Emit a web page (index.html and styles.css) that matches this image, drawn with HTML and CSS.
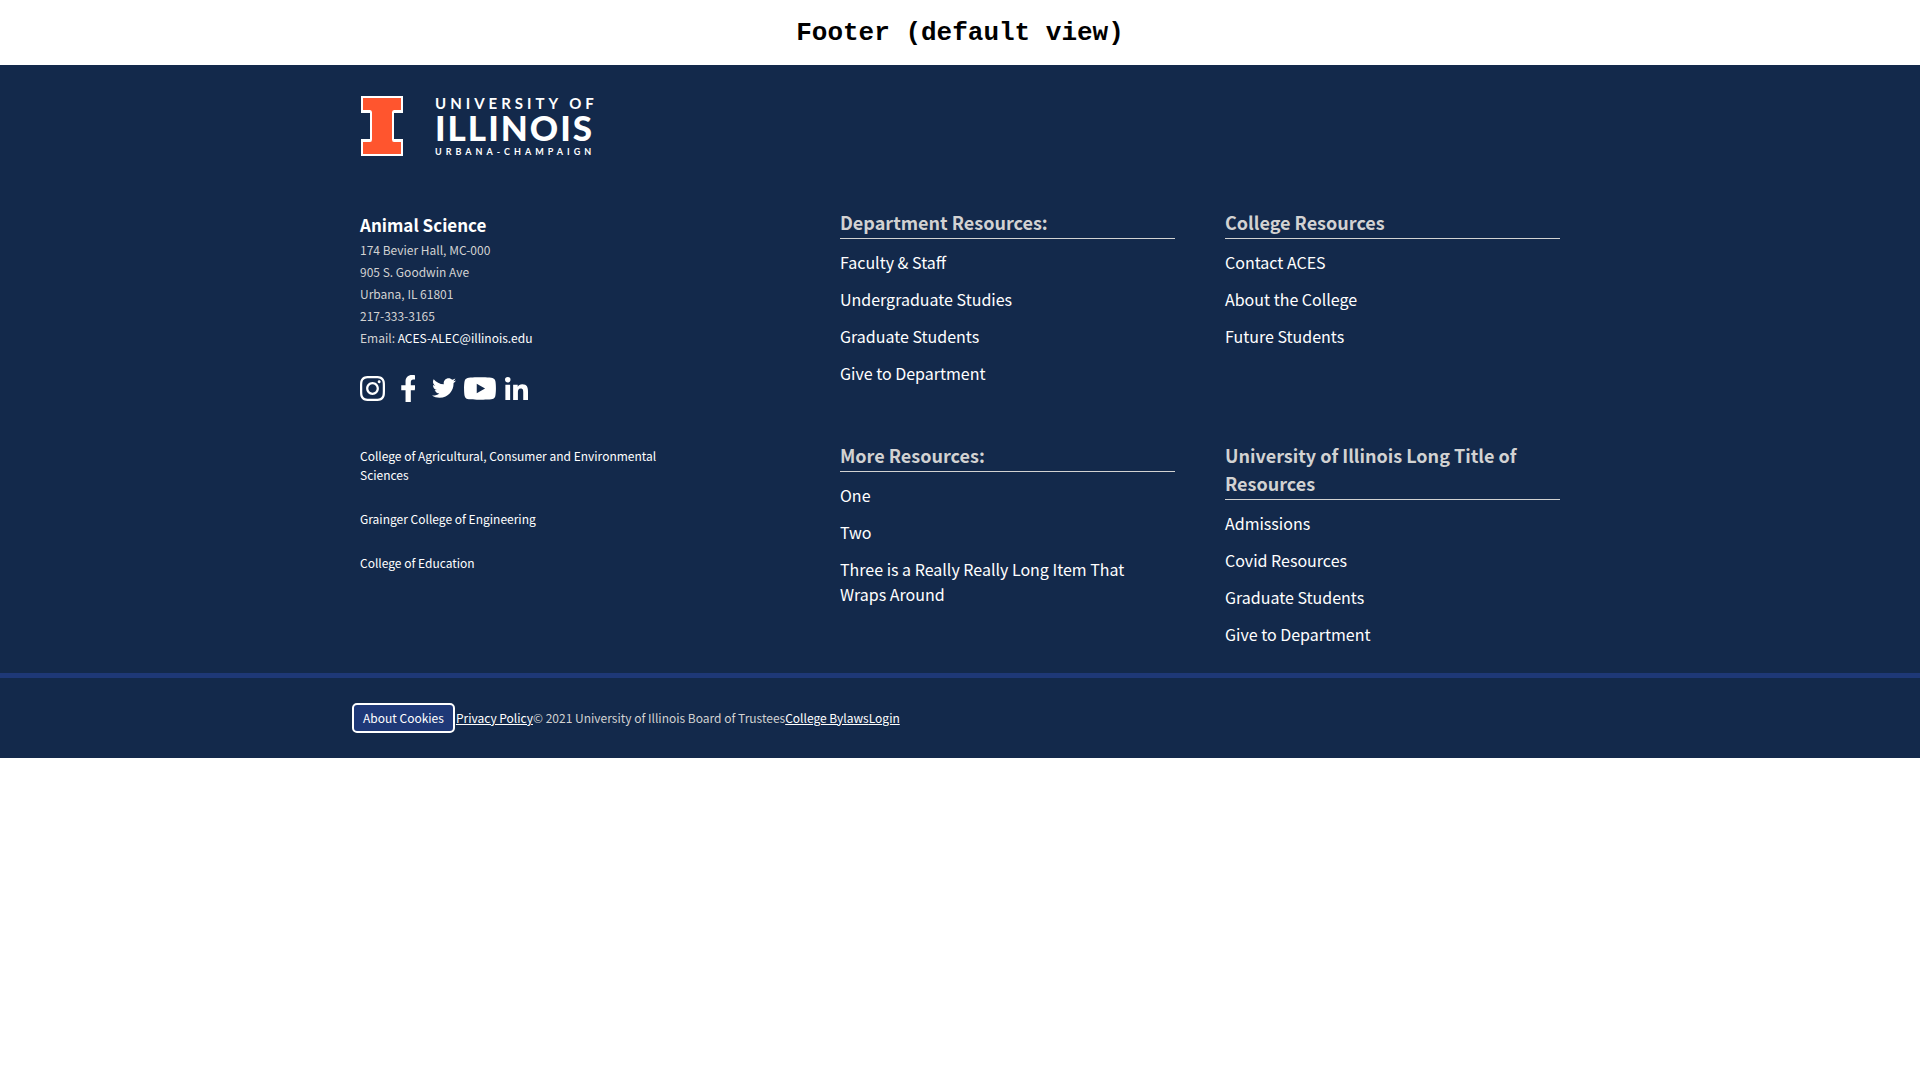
FILE: index.html
```html
<!DOCTYPE html>
<html lang="en">
<head>
<meta charset="utf-8">
<meta name="viewport" content="width=device-width, initial-scale=1">
<title>Footer (default view)</title>
<link rel="stylesheet" href="styles.css">
</head>
<body>
<h1 class="page-title">Footer (default view)</h1>
<footer class="footer">
  <div class="container">
    <a class="logo" href="#" aria-label="University of Illinois Urbana-Champaign">
      <svg class="block-i" viewBox="0 0 42 60" aria-hidden="true">
        <path fill="#fff" d="M0 0H42V17H33V43H42V60H0V43H9V17H0Z"/>
        <path fill="#ff552e" d="M2 2H40V14H33Q31 14 31 16.500V43.500Q31 46 33 46H40V58H2V46H9Q11 46 11 43.500V16.500Q11 14 9 14H2Z"/>
      </svg>
      <span class="wordmark">
        <span class="wordmark-top">UNIVERSITY OF</span>
        <span class="wordmark-main">ILLINOIS</span>
        <span class="wordmark-bottom">URBANA-CHAMPAIGN</span>
      </span>
    </a>
    <div class="columns">
      <section class="about">
        <h2 class="unit">Animal Science</h2>
        <address class="address">
          <p>174 Bevier Hall, MC-000</p>
          <p>905 S. Goodwin Ave</p>
          <p>Urbana, IL 61801</p>
          <p>217-333-3165</p>
          <p>Email: <a href="#">ACES-ALEC@illinois.edu</a></p>
        </address>
        <ul class="social">
          <li><a href="#" aria-label="Instagram"><svg width="25" height="25" viewBox="0 32 448 448"><path d="M224.100 141c-63.600 0-114.900 51.300-114.900 114.900s51.300 114.900 114.900 114.900S339 319.500 339 255.900 287.700 141 224.100 141zm0 189.600c-41.100 0-74.700-33.500-74.700-74.700s33.500-74.700 74.700-74.700 74.700 33.500 74.700 74.700-33.600 74.700-74.700 74.700zm146.400-194.300c0 14.900-12 26.800-26.800 26.800-14.900 0-26.800-12-26.800-26.800s12-26.800 26.800-26.800 26.800 12 26.800 26.800zm76.100 27.200c-1.700-35.900-9.900-67.700-36.200-93.900-26.200-26.200-58-34.400-93.900-36.200-37-2.100-147.900-2.100-184.900 0-35.800 1.700-67.600 9.900-93.900 36.100s-34.400 58-36.200 93.900c-2.100 37-2.100 147.900 0 184.900 1.700 35.900 9.900 67.700 36.200 93.900s58 34.400 93.900 36.200c37 2.100 147.900 2.100 184.900 0 35.900-1.700 67.700-9.900 93.900-36.200 26.200-26.200 34.400-58 36.200-93.900 2.100-37 2.100-147.800 0-184.800zM398.800 388c-7.800 19.600-22.900 34.700-42.600 42.600-29.500 11.700-99.500 9-132.100 9s-102.700 2.600-132.100-9c-19.600-7.800-34.700-22.900-42.600-42.600-11.700-29.500-9-99.500-9-132.100s-2.600-102.700 9-132.100c7.800-19.600 22.900-34.700 42.600-42.600 29.500-11.700 99.500-9 132.100-9s102.700-2.600 132.100 9c19.600 7.800 34.700 22.900 42.600 42.600 11.700 29.500 9 99.500 9 132.100s2.700 102.700-9 132.100z"/></svg></a></li>
          <li><a href="#" aria-label="Facebook"><svg width="14" height="27" viewBox="22 0 258 512"><path d="M279.140 288l14.220-92.660h-88.910v-60.130c0-25.350 12.420-50.060 52.240-50.060h40.420V6.260S260.430 0 225.360 0c-73.220 0-121.080 44.380-121.080 124.720v70.620H22.890V288h81.390v224h100.170V288z"/></svg></a></li>
          <li><a href="#" aria-label="Twitter"><svg width="24" height="20" viewBox="0 48 512 416"><path d="M459.370 151.716c.325 4.548.325 9.097.325 13.645 0 138.720-105.583 298.558-298.558 298.558-59.452 0-114.680-17.219-161.137-47.106 8.447.974 16.568 1.299 25.340 1.299 49.055 0 94.213-16.568 130.274-44.832-46.132-.975-84.792-31.188-98.112-72.772 6.498.974 12.995 1.624 19.818 1.624 9.421 0 18.843-1.300 27.614-3.573-48.081-9.747-84.143-51.980-84.143-102.985v-1.299c13.969 7.797 30.214 12.670 47.431 13.319-28.264-18.843-46.781-51.005-46.781-87.391 0-19.492 5.197-37.360 14.294-52.954 51.655 63.675 129.300 105.258 216.365 109.807-1.624-7.797-2.599-15.918-2.599-24.040 0-57.828 46.782-104.934 104.934-104.934 30.213 0 57.502 12.670 76.670 33.137 23.715-4.548 46.456-13.320 66.599-25.340-7.798 24.366-24.366 44.833-46.132 57.827 21.117-2.273 41.584-8.122 60.426-16.243-14.292 20.791-32.161 39.308-52.628 54.253z"/></svg></a></li>
          <li><a href="#" aria-label="YouTube"><svg width="32" height="23" viewBox="14 64 548 385"><path d="M549.655 124.083c-6.281-23.650-24.787-42.276-48.284-48.597C458.781 64 288 64 288 64S117.220 64 74.629 75.486c-23.497 6.322-42.003 24.947-48.284 48.597-11.412 42.867-11.412 132.305-11.412 132.305s0 89.438 11.412 132.305c6.281 23.650 24.787 41.500 48.284 47.821C117.220 448 288 448 288 448s170.780 0 213.371-11.486c23.497-6.321 42.003-24.171 48.284-47.821 11.412-42.867 11.412-132.305 11.412-132.305s0-89.438-11.412-132.305zm-317.510 213.508V175.185l142.739 81.205-142.739 81.201z"/></svg></a></li>
          <li><a href="#" aria-label="LinkedIn"><svg width="23" height="23" viewBox="0 0 448 448"><path d="M100.280 448H7.400V148.900h92.880zM53.790 108.100C24.090 108.100 0 83.500 0 53.800a53.790 53.790 0 0 1 107.580 0c0 29.700-24.100 54.300-53.790 54.300zM447.900 448h-92.680V302.400c0-34.700-.7-79.200-48.290-79.200-48.290 0-55.690 37.700-55.690 76.700V448h-92.780V148.900h89.080v40.800h1.300c12.400-23.500 42.690-48.300 87.880-48.300 94 0 111.280 61.900 111.280 142.300V448z"/></svg></a></li>
        </ul>
        <ul class="colleges">
          <li><a href="#">College of Agricultural, Consumer and Environmental Sciences</a></li>
          <li><a href="#">Grainger College of Engineering</a></li>
          <li><a href="#">College of Education</a></li>
        </ul>
      </section>
      <div class="resources">
        <nav class="link-group">
          <h3>Department Resources:</h3>
          <ul>
            <li><a href="#">Faculty &amp; Staff</a></li>
            <li><a href="#">Undergraduate Studies</a></li>
            <li><a href="#">Graduate Students</a></li>
            <li><a href="#">Give to Department</a></li>
          </ul>
        </nav>
        <nav class="link-group">
          <h3>College Resources</h3>
          <ul>
            <li><a href="#">Contact ACES</a></li>
            <li><a href="#">About the College</a></li>
            <li><a href="#">Future Students</a></li>
          </ul>
        </nav>
        <nav class="link-group">
          <h3>More Resources:</h3>
          <ul>
            <li><a href="#">One</a></li>
            <li><a href="#">Two</a></li>
            <li><a href="#">Three is a Really Really Long Item That Wraps Around</a></li>
          </ul>
        </nav>
        <nav class="link-group">
          <h3>University of Illinois Long Title of Resources</h3>
          <ul>
            <li><a href="#">Admissions</a></li>
            <li><a href="#">Covid Resources</a></li>
            <li><a href="#">Graduate Students</a></li>
            <li><a href="#">Give to Department</a></li>
          </ul>
        </nav>
      </div>
    </div>
  </div>
  <div class="legal">
    <div class="legal-inner">
      <button type="button" class="cookies">About Cookies</button>
      <a href="#">Privacy Policy</a>
      <span>© 2021 University of Illinois Board of Trustees</span>
      <a href="#">College Bylaws</a>
      <a href="#">Login</a>
    </div>
  </div>
</footer>
</body>
</html>
```

FILE: styles.css
```css
*, *::before, *::after { box-sizing: border-box; }

body, h1, h2, h3, p, ul { margin: 0; padding: 0; }
ul { list-style: none; }

body {
  background: #fff;
  font-family: "Source Sans Pro", "Noto Sans CJK SC", sans-serif;
}

.page-title {
  padding: 17px 0 16px;
  font: bold 26px/32px "Courier New", "Liberation Mono", monospace;
  text-align: center;
  color: #000;
}

.footer {
  background: #13294b;
  color: #d2d2d2;
}

.footer a { color: #fff; text-decoration: none; }

.container {
  max-width: 1200px;
  margin: 0 auto;
  padding: 31px 0 26px;
}

/* University logo */
.logo {
  display: inline-flex;
  gap: 32px;
  height: 60px;
  padding-left: 1px;
  vertical-align: top;
}
.block-i { width: 42px; height: 60px; }
.wordmark {
  display: flex;
  flex-direction: column;
  font-family: Lato, sans-serif;
  font-weight: 700;
  white-space: nowrap;
}
.wordmark-top { font-size: 15px; line-height: 14px; letter-spacing: 4px; }
.wordmark-main { font-size: 35px; line-height: 34px; letter-spacing: 2px; font-weight: 900; }
.wordmark-bottom { font-size: 9px; line-height: 15px; letter-spacing: 4px; }

.columns {
  display: grid;
  grid-template-columns: 2fr 3fr;
  padding-top: 52px;
}

/* Contact column */
.about { padding-top: 3px; }
.unit {
  font-size: 17px;
  line-height: 28px;
  color: #fff;
}
.address {
  font-size: 12px;
  line-height: 22px;
  font-style: normal;
}

.social {
  display: flex;
  gap: 4px;
  margin: 23px 0 42px -4px;
}
.social a {
  display: flex;
  align-items: center;
  justify-content: center;
  width: 32px;
  height: 32px;
}
.social svg { fill: #fff; }

.colleges {
  display: grid;
  gap: 25px;
  max-width: 320px;
  font-size: 12px;
  line-height: 19px;
}

/* Link groups */
.resources {
  display: grid;
  grid-template-columns: 1fr 1fr;
  gap: 55px 50px;
}
.link-group h3 {
  padding-bottom: 2px;
  border-bottom: 1px solid #d2d2d2;
  font-size: 18px;
  line-height: 28px;
}
.link-group ul {
  display: grid;
  gap: 12px;
  padding: 11px 12px 0 0;
  font-size: 16px;
  line-height: 25px;
}

/* Legal bar */
.legal {
  padding: 25px 0;
  border-top: 5px solid #1e3877;
}
.legal-inner {
  display: flex;
  align-items: center;
  max-width: 1216px;
  margin: 0 auto;
  font-size: 12px;
  line-height: 22px;
}
.legal a { text-decoration: underline; }
.cookies {
  height: 30px;
  margin-right: 1px;
  padding: 0 9px;
  border: 2px solid #fff;
  border-radius: 5px;
  background: #1e3877;
  color: #fff;
  font: inherit;
}
```
